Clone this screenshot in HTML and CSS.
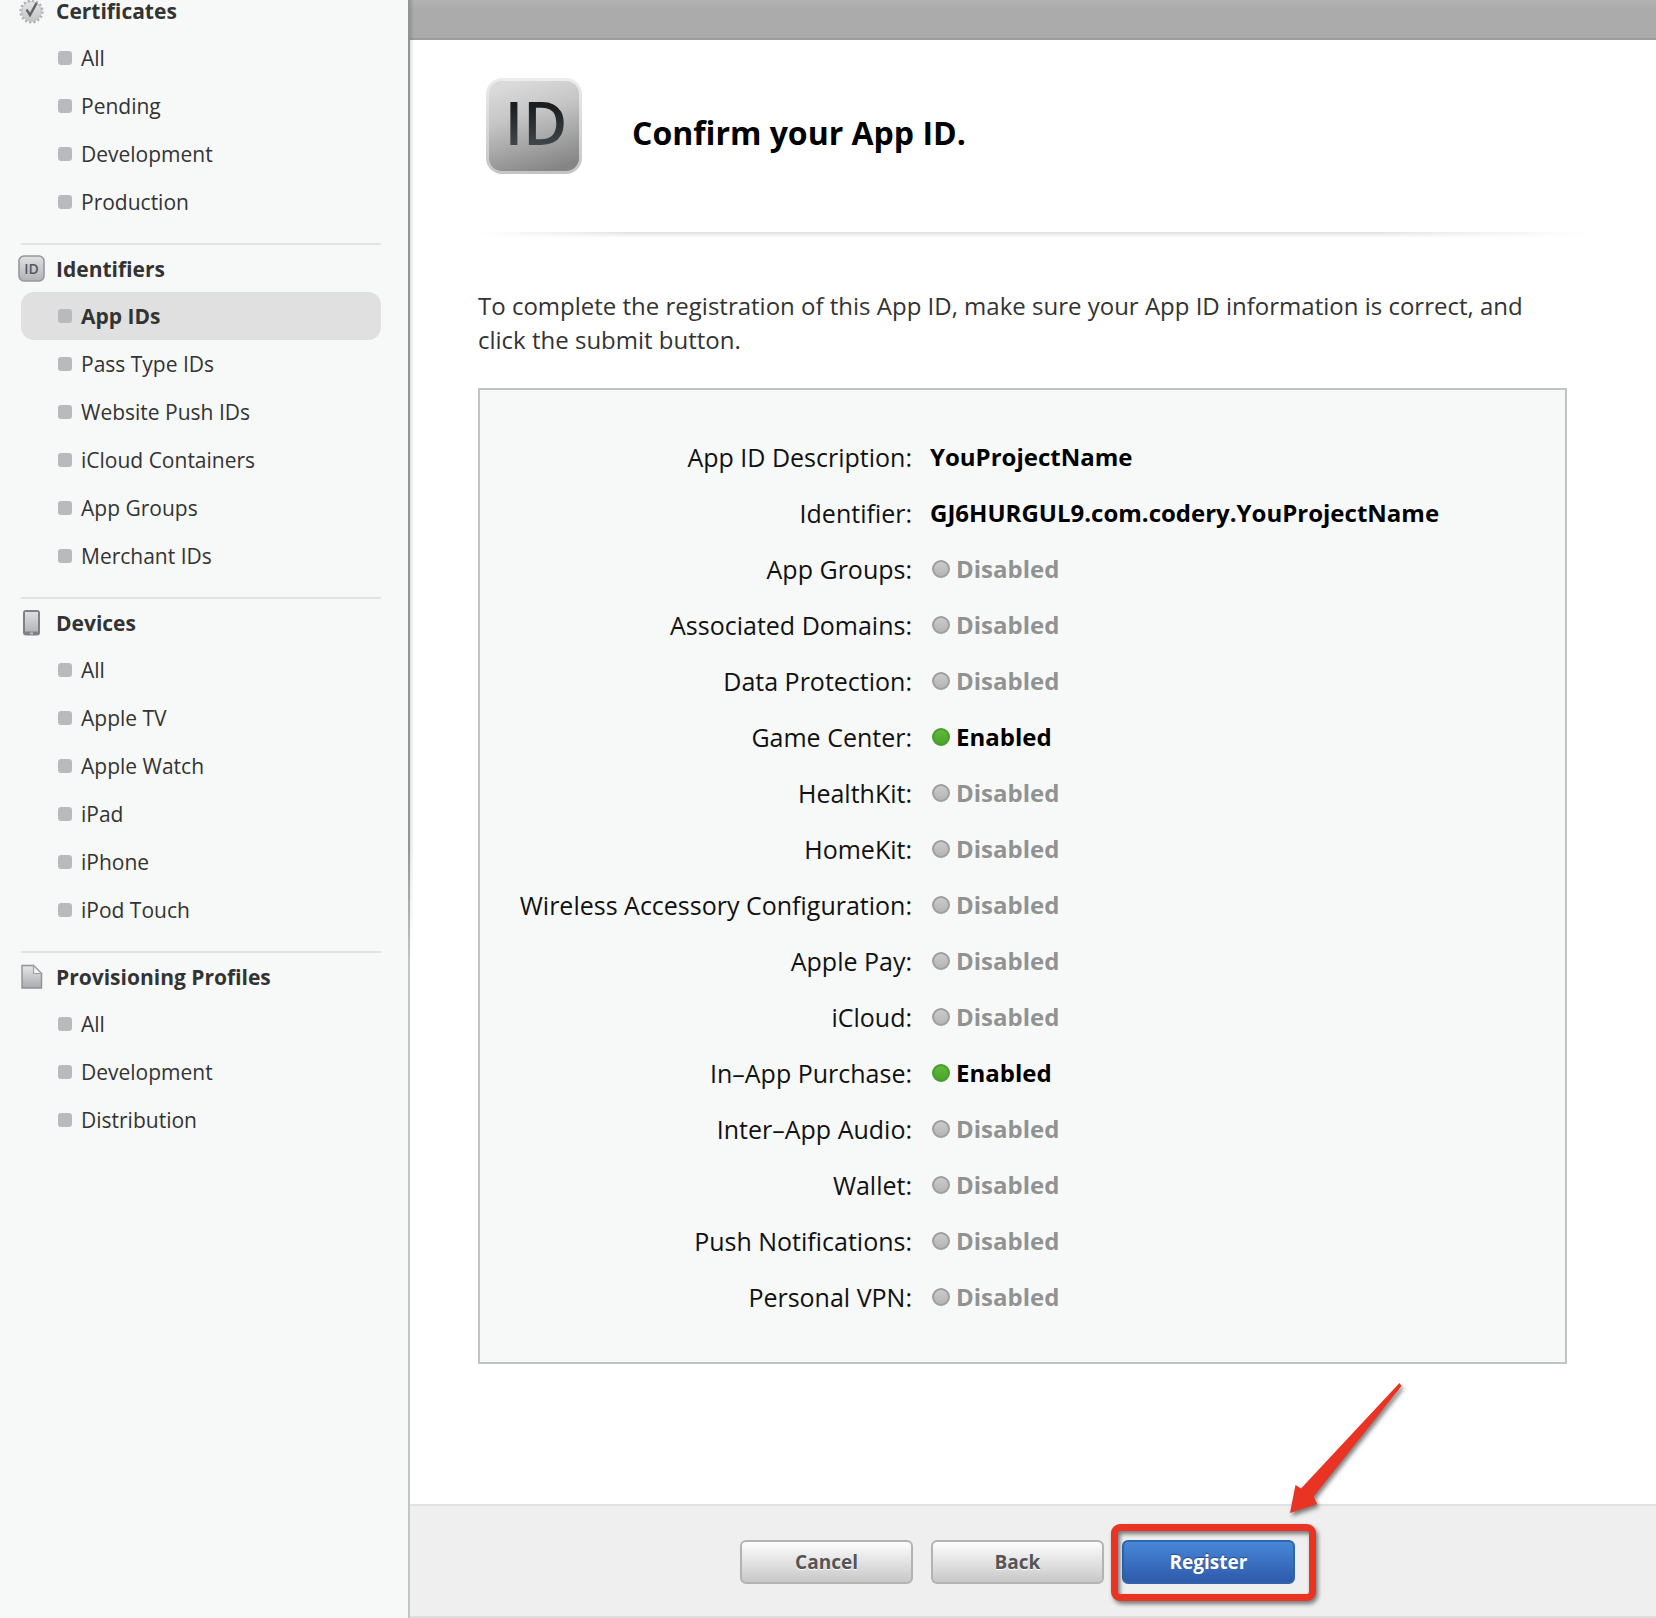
FILE: index.html
```html
<!DOCTYPE html>
<html lang="en">
<head>
<meta charset="utf-8">
<meta name="viewport" content="width=device-width, initial-scale=1">
<title>Confirm your App ID</title>
<link rel="stylesheet" href="styles.css">
</head>
<body>
<aside class="sidebar">
  <nav class="nav">
    <section class="group">
      <h2 class="group-title">
        <svg class="icon" viewBox="0 0 27 27" aria-hidden="true">
          <defs><linearGradient id="seal" x1="0" y1="0" x2="0" y2="1"><stop offset="0" stop-color="#e4e5e6"/><stop offset="1" stop-color="#c3c4c6"/></linearGradient></defs>
          <circle cx="13.5" cy="13.5" r="10.6" fill="none" stroke="#b1b2b4" stroke-width="3" stroke-dasharray="2.2 1.963"/>
          <circle cx="13.5" cy="13.5" r="9.8" fill="url(#seal)" stroke="#bfc0c2" stroke-width="1"/>
          <path d="M8.600 11.500l3.400 5.600L18.600 5" fill="none" stroke="#606366" stroke-width="2.400"/>
        </svg>
        Certificates
      </h2>
      <ul class="items">
        <li><a href="#">All</a></li>
        <li><a href="#">Pending</a></li>
        <li><a href="#">Development</a></li>
        <li><a href="#">Production</a></li>
      </ul>
    </section>
    <section class="group">
      <h2 class="group-title">
        <svg class="icon" viewBox="0 0 27 27" aria-hidden="true">
          <defs><linearGradient id="tag" x1="0" y1="0" x2="0" y2="1"><stop offset="0" stop-color="#e0e1e3"/><stop offset="1" stop-color="#b2b3b8"/></linearGradient></defs>
          <rect x="1" y="1" width="25" height="25" rx="5" fill="url(#tag)" stroke="#96979c" stroke-width="1.6"/>
          <text class="tag-text" x="13.5" y="18.500" text-anchor="middle">ID</text>
        </svg>
        Identifiers
      </h2>
      <ul class="items">
        <li><a class="current" href="#" aria-current="page">App IDs</a></li>
        <li><a href="#">Pass Type IDs</a></li>
        <li><a href="#">Website Push IDs</a></li>
        <li><a href="#">iCloud Containers</a></li>
        <li><a href="#">App Groups</a></li>
        <li><a href="#">Merchant IDs</a></li>
      </ul>
    </section>
    <section class="group">
      <h2 class="group-title">
        <svg class="icon" viewBox="0 0 27 27" aria-hidden="true">
          <defs><linearGradient id="screen" x1="0" y1="0" x2="0" y2="1"><stop offset="0" stop-color="#dddee0"/><stop offset="1" stop-color="#b5b6ba"/></linearGradient></defs>
          <rect x="5" y="1" width="17" height="25.5" rx="3" fill="#808187"/>
          <rect x="7" y="3" width="13" height="19.5" fill="url(#screen)"/>
          <rect x="12" y="23.4" width="3" height="2" fill="#bcbdc0"/>
        </svg>
        Devices
      </h2>
      <ul class="items">
        <li><a href="#">All</a></li>
        <li><a href="#">Apple TV</a></li>
        <li><a href="#">Apple Watch</a></li>
        <li><a href="#">iPad</a></li>
        <li><a href="#">iPhone</a></li>
        <li><a href="#">iPod Touch</a></li>
      </ul>
    </section>
    <section class="group">
      <h2 class="group-title">
        <svg class="icon" viewBox="0 0 27 27" aria-hidden="true">
          <defs><linearGradient id="sheet" x1="0" y1="0" x2="0" y2="1"><stop offset="0" stop-color="#e6e7e9"/><stop offset="1" stop-color="#a9aaaf"/></linearGradient></defs>
          <path d="M4 2.5h11.5l8 8V25H4z" fill="url(#sheet)" stroke="#919297" stroke-width="1.4"/>
          <path d="M15.5 2.5v8h8z" fill="#f4f4f5" stroke="#a2a3a7" stroke-width="1.2"/>
        </svg>
        Provisioning Profiles
      </h2>
      <ul class="items">
        <li><a href="#">All</a></li>
        <li><a href="#">Development</a></li>
        <li><a href="#">Distribution</a></li>
      </ul>
    </section>
  </nav>
</aside>

<main class="main">
  <div class="topbar"></div>
  <div class="content">
    <header class="heading">
      <svg class="badge" viewBox="0 0 96 96" aria-hidden="true">
        <defs>
          <linearGradient id="plate" x1="0.35" y1="0" x2="0.65" y2="1"><stop offset="0" stop-color="#dadada"/><stop offset="0.35" stop-color="#c6c6c6"/><stop offset="1" stop-color="#858585"/></linearGradient>
          <linearGradient id="rim" x1="0" y1="0" x2="0" y2="1"><stop offset="0" stop-color="#ededed"/><stop offset="1" stop-color="#c4c4c4"/></linearGradient>
          <linearGradient id="ink" x1="0" y1="0" x2="0" y2="1"><stop offset="0.3" stop-color="#1a1e21"/><stop offset="0.9" stop-color="#4a5054"/></linearGradient>
        </defs>
        <rect width="96" height="96" rx="16" fill="url(#rim)"/>
        <rect x="3" y="3" width="90" height="90" rx="13" fill="url(#plate)"/>
        <text class="badge-text" x="50" y="67" text-anchor="middle" fill="url(#ink)">ID</text>
      </svg>
      <h1 class="title">Confirm your App ID.</h1>
    </header>
    <hr class="rule">
    <p class="intro">To complete the registration of this App ID, make sure your App ID information is correct, and click the submit button.</p>
    <div class="panel">
      <table class="details">
        <tbody>
          <tr><th scope="row">App ID Description:</th><td>YouProjectName</td></tr>
          <tr><th scope="row">Identifier:</th><td>GJ6HURGUL9.com.codery.YouProjectName</td></tr>
          <tr><th scope="row">App Groups:</th><td><span class="status">Disabled</span></td></tr>
          <tr><th scope="row">Associated Domains:</th><td><span class="status">Disabled</span></td></tr>
          <tr><th scope="row">Data Protection:</th><td><span class="status">Disabled</span></td></tr>
          <tr><th scope="row">Game Center:</th><td><span class="status on">Enabled</span></td></tr>
          <tr><th scope="row">HealthKit:</th><td><span class="status">Disabled</span></td></tr>
          <tr><th scope="row">HomeKit:</th><td><span class="status">Disabled</span></td></tr>
          <tr><th scope="row">Wireless Accessory Configuration:</th><td><span class="status">Disabled</span></td></tr>
          <tr><th scope="row">Apple Pay:</th><td><span class="status">Disabled</span></td></tr>
          <tr><th scope="row">iCloud:</th><td><span class="status">Disabled</span></td></tr>
          <tr><th scope="row">In–App Purchase:</th><td><span class="status on">Enabled</span></td></tr>
          <tr><th scope="row">Inter–App Audio:</th><td><span class="status">Disabled</span></td></tr>
          <tr><th scope="row">Wallet:</th><td><span class="status">Disabled</span></td></tr>
          <tr><th scope="row">Push Notifications:</th><td><span class="status">Disabled</span></td></tr>
          <tr><th scope="row">Personal VPN:</th><td><span class="status">Disabled</span></td></tr>
        </tbody>
      </table>
    </div>
  </div>
  <footer class="actions">
    <button class="btn" type="button">Cancel</button>
    <button class="btn" type="button">Back</button>
    <div class="marked">
      <button class="btn primary" type="submit">Register</button>
      <span class="frame"></span>
      <svg class="arrow" viewBox="0 0 130 150" aria-hidden="true">
        <path d="M119.5 8L121.5 11L33.5 121.5L37 129L10 138L15.5 110L21 113.5L70 61z" fill="#e93323"/>
      </svg>
    </div>
  </footer>
</main>
</body>
</html>
```
FILE: styles.css
```css
*,
*::before,
*::after {
  box-sizing: border-box;
}

body {
  margin: 0;
  display: flex;
  min-height: 100vh;
  background: #fff;
  color: #111;
  font-family: "Open Sans", "Noto Sans", sans-serif;
  font-size: 24px;
}

/* Sidebar */
.sidebar {
  flex: 0 0 410px;
  background: #f7f9f8;
  border-right: 2px solid #c3c5c4;
  color: #333;
  font-size: 21px;
}

.nav {
  padding: 0 27px 0 21px;
}

.group {
  padding-bottom: 17px;
}

.group + .group {
  border-top: 2px solid #e2e4e3;
}

.group-title {
  display: flex;
  align-items: center;
  gap: 11px;
  height: 47px;
  margin: 0 0 0 -3px;
  font-size: 21px;
  font-weight: 700;
  line-height: 24px;
}

.group:first-child .group-title {
  height: 22px;
  margin-bottom: 12px;
}

.icon {
  flex: none;
  width: 27px;
  height: 27px;
}

.tag-text {
  font-size: 14px;
  font-weight: 600;
  fill: #55575b;
}

.items {
  margin: 0;
  padding: 0;
  list-style: none;
}

.items a {
  display: flex;
  align-items: center;
  gap: 9px;
  padding-left: 37px;
  border-radius: 13px;
  color: inherit;
  line-height: 48px;
  text-decoration: none;
}

.items a::before {
  content: "";
  width: 14px;
  height: 14px;
  border-radius: 3px;
  background: #b9babd;
}

.items .current {
  background: #e0e0e0;
  font-weight: 700;
}

/* Main column */
.main {
  flex: 1;
  min-width: 0;
  position: relative;
  display: flex;
  flex-direction: column;
}

/* Shadow that the sidebar casts on the upper part of the page */
.main::before {
  content: "";
  position: absolute;
  top: 0;
  left: -2px;
  width: 6px;
  height: 960px;
  background: linear-gradient(90deg, rgba(0, 0, 0, 0.25) 2px, rgba(0, 0, 0, 0.12) 2px, transparent);
  mask-image: linear-gradient(#000 88%, transparent);
}

.topbar {
  height: 40px;
  background: linear-gradient(#b2b2b2, #ababab 10px);
  border-bottom: 2px solid #9e9e9e;
}

.content {
  padding: 38px 89px 139px 68px;
}

.heading {
  display: flex;
  align-items: center;
  gap: 50px;
  padding-left: 8px;
}

.badge {
  flex: none;
  width: 96px;
  height: 96px;
}

.badge-text {
  font-size: 60px;
  font-weight: 600;
}

.title {
  margin: 14px 0 0;
  color: #000;
  font-size: 32px;
  line-height: 40px;
}

.rule {
  height: 6px;
  margin: 58px -23px 51px 0;
  border: 0;
  background:
    linear-gradient(90deg, #fff, transparent 14%, transparent 80%, #fff),
    linear-gradient(#e0e0e0, #fff);
}

.intro {
  margin: 0 0 31px;
  color: #333;
  line-height: 34px;
}

.panel {
  padding: 39px 0 37px;
  border: 2px solid #c0c4c2;
  background: #f7f9f8;
}

.details {
  width: 100%;
  border-collapse: collapse;
  line-height: 56px;
}

.details th,
.details td {
  padding: 0;
}

.details th {
  width: 432px;
  font-size: 25px;
  font-weight: 400;
  text-align: right;
  white-space: nowrap;
}

.details td {
  padding-left: 18px;
  color: #000;
  font-weight: 700;
}

.status {
  display: flex;
  align-items: center;
  gap: 6px;
  padding-left: 2px;
  color: #919392;
}

.status::before {
  content: "";
  width: 18px;
  height: 18px;
  border: 2px solid #9f9f9f;
  border-radius: 50%;
  background: linear-gradient(#cbcbcb, #b5b5b5);
}

.status.on {
  color: #000;
}

.status.on::before {
  border-color: #4b9c2c;
  background: linear-gradient(#5cba37, #4ba52a);
}

/* Button bar */
.actions {
  display: flex;
  justify-content: center;
  gap: 18px;
  margin-top: auto;
  padding: 34px 99px 32px 68px;
  border-top: 2px solid #e2e2e2;
  border-bottom: 2px solid #dedede;
  background: #efefef;
}

.btn {
  display: block;
  width: 173px;
  height: 44px;
  padding: 0;
  border: 2px solid #b3b3b3;
  border-radius: 6px;
  background: linear-gradient(#fdfdfd, #c8c8c8);
  color: #555;
  font: 700 19px/24px "Open Sans", "Noto Sans", sans-serif;
  text-shadow: 0 1px 1px #fff;
}

.btn.primary {
  border-color: #2d66ad;
  background: linear-gradient(#4787d8, #2f5aab);
  color: #fff;
  text-shadow: 0 -1px 1px #234a86;
}

.marked {
  position: relative;
}

.frame {
  position: absolute;
  inset: -16px -21px -17px -11px;
  border: 7px solid #e93323;
  border-radius: 9px;
  filter: drop-shadow(2px 3px 2px rgba(0, 0, 0, 0.5));
  pointer-events: none;
}

.arrow {
  position: absolute;
  left: 158px;
  top: -165px;
  width: 130px;
  height: 150px;
  overflow: visible;
  filter: drop-shadow(2px 3px 2px rgba(0, 0, 0, 0.5));
  pointer-events: none;
}
```
